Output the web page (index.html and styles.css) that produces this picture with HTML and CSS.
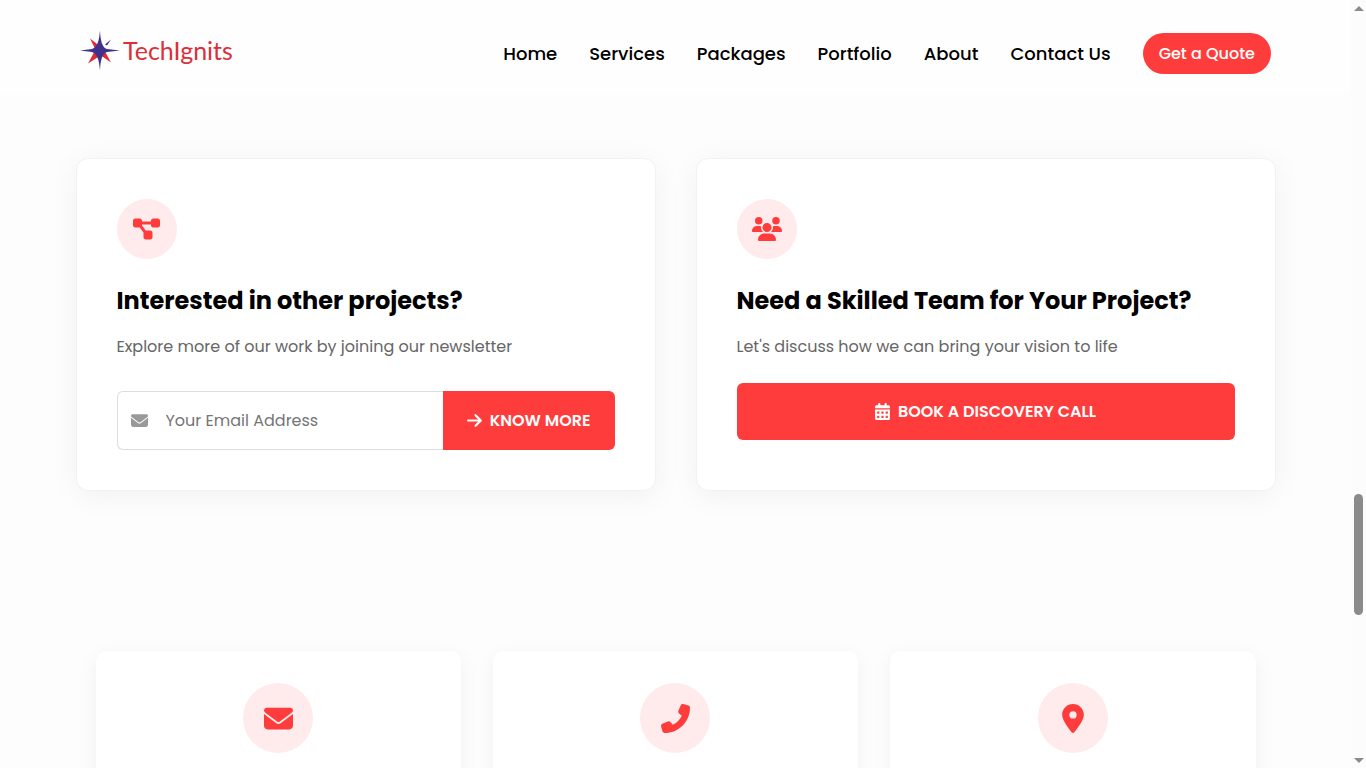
FILE: index.html
```html
<!DOCTYPE html>
<html lang="en">
<head>
  <meta charset="UTF-8">
  <meta name="viewport" content="width=device-width, initial-scale=1.0">
  <title>TechIgnits</title>
  <link rel="stylesheet" href="styles.css">
</head>
<body>
  <div class="page">
    <header class="header">
      <a href="#" class="logo">
        <svg class="logo-star" viewBox="0 0 40 40" aria-hidden="true">
          <path fill="#e02b35" d="M10 8 L19 15 L15 18Z M8 33 L14 22 L19 26Z M31 32 L21 25 L25 21Z"/>
          <path fill="#3f328c" d="M31 9 L27 15 L25 14Z"/>
          <path fill="#3f328c" d="M20 0 C20.500 10 22 17 27 18.500 L40 20 L27 21.500 C22 23 20.500 30 20 40 C19 30 18 24 12 21.500 L0 20 L12 18.500 C18 16 19 10 20 0Z"/>
        </svg>
        <span>TechIgnits</span>
      </a>
      <nav class="nav">
        <a href="#">Home</a>
        <a href="#">Services</a>
        <a href="#">Packages</a>
        <a href="#">Portfolio</a>
        <a href="#">About</a>
        <a href="#">Contact Us</a>
        <a href="#" class="quote-btn">Get a Quote</a>
      </nav>
    </header>

    <main>
      <section class="cta">
        <div class="cta-card">
          <div class="icon-circle">
            <svg width="27" height="24" viewBox="0 0 576 512" aria-hidden="true"><path d="M0 80C0 53.5 21.5 32 48 32l96 0c26.5 0 48 21.5 48 48l0 16 192 0 0-16c0-26.5 21.5-48 48-48l96 0c26.5 0 48 21.5 48 48l0 96c0 26.5-21.5 48-48 48l-96 0c-26.5 0-48-21.5-48-48l0-16-192 0 0 16c0 1.7-.1 3.4-.3 5L272 288l96 0c26.5 0 48 21.5 48 48l0 96c0 26.5-21.5 48-48 48l-96 0c-26.5 0-48-21.5-48-48l0-96c0-1.7 .1-3.4 .3-5L144 224l-96 0c-26.5 0-48-21.5-48-48L0 80z"/></svg>
          </div>
          <h2>Interested in other projects?</h2>
          <p>Explore more of our work by joining our newsletter</p>
          <form class="newsletter">
            <label class="email-field">
              <svg width="17" height="17" viewBox="0 0 512 512" role="img" aria-label="Email"><path d="M48 64C21.5 64 0 85.5 0 112c0 15.1 7.1 29.3 19.2 38.4L236.8 313.6c11.4 8.5 27 8.5 38.4 0L492.8 150.4c12.1-9.1 19.2-23.3 19.2-38.4c0-26.5-21.5-48-48-48L48 64zM0 176L0 384c0 35.3 28.7 64 64 64l384 0c35.3 0 64-28.7 64-64l0-208L294.4 339.2c-22.8 17.1-54 17.1-76.8 0L0 176z"/></svg>
              <input type="email" placeholder="Your Email Address">
            </label>
            <button type="submit" class="btn">
              <svg width="15" height="17" viewBox="0 0 448 512" aria-hidden="true"><path d="M438.6 278.6c12.5-12.5 12.5-32.8 0-45.3l-160-160c-12.5-12.5-32.8-12.5-45.3 0s-12.5 32.8 0 45.3L338.8 224 32 224c-17.7 0-32 14.3-32 32s14.3 32 32 32l306.7 0L233.4 393.4c-12.5 12.5-12.5 32.8 0 45.3s32.8 12.5 45.3 0l160-160z"/></svg>
              KNOW MORE
            </button>
          </form>
        </div>

        <div class="cta-card">
          <div class="icon-circle">
            <svg width="30" height="24" viewBox="0 0 640 512" aria-hidden="true"><path d="M144 0a80 80 0 1 1 0 160A80 80 0 1 1 144 0zM512 0a80 80 0 1 1 0 160A80 80 0 1 1 512 0zM0 298.7C0 239.8 47.8 192 106.7 192l42.7 0c15.9 0 31 3.5 44.6 9.7c-1.3 7.2-1.9 14.7-1.9 22.3c0 38.2 16.8 72.5 43.3 96c-.2 0-.4 0-.7 0L21.3 320C9.6 320 0 310.4 0 298.7zM405.3 320c-.2 0-.4 0-.7 0c26.6-23.5 43.3-57.8 43.3-96c0-7.6-.7-15-1.9-22.3c13.6-6.3 28.7-9.7 44.6-9.7l42.7 0C592.2 192 640 239.8 640 298.7c0 11.8-9.6 21.3-21.3 21.3l-213.3 0zM224 224a96 96 0 1 1 192 0 96 96 0 1 1 -192 0zM128 485.3C128 411.7 187.7 352 261.3 352l117.3 0C452.3 352 512 411.7 512 485.3c0 14.7-11.9 26.7-26.7 26.7l-330.7 0c-14.7 0-26.7-11.9-26.7-26.7z"/></svg>
          </div>
          <h2>Need a Skilled Team for Your Project?</h2>
          <p>Let's discuss how we can bring your vision to life</p>
          <a href="#" class="btn btn-block">
            <svg width="15" height="17" viewBox="0 0 448 512" aria-hidden="true"><path fill-rule="evenodd" d="M128 0c17.7 0 32 14.3 32 32l0 32 128 0 0-32c0-17.7 14.3-32 32-32s32 14.3 32 32l0 32 48 0c26.5 0 48 21.5 48 48l0 48L0 160l0-48C0 85.5 21.5 64 48 64l48 0 0-32c0-17.7 14.3-32 32-32zM0 192l448 0 0 272c0 26.5-21.5 48-48 48L48 512c-26.5 0-48-21.5-48-48L0 192zM64 256v64h64v-64zM192 256v64h64v-64zM320 256v64h64v-64zM64 384v64h64v-64zM192 384v64h64v-64zM320 384v64h64v-64z"/></svg>
            BOOK A DISCOVERY CALL
          </a>
        </div>
      </section>

      <section class="contact">
        <div class="contact-card">
          <div class="icon-circle large">
            <svg width="29" height="29" viewBox="0 0 512 512" role="img" aria-label="Email"><path d="M48 64C21.5 64 0 85.5 0 112c0 15.1 7.1 29.3 19.2 38.4L236.8 313.6c11.4 8.5 27 8.5 38.4 0L492.8 150.4c12.1-9.1 19.2-23.3 19.2-38.4c0-26.5-21.5-48-48-48L48 64zM0 176L0 384c0 35.3 28.7 64 64 64l384 0c35.3 0 64-28.7 64-64l0-208L294.4 339.2c-22.8 17.1-54 17.1-76.8 0L0 176z"/></svg>
          </div>
        </div>
        <div class="contact-card">
          <div class="icon-circle large">
            <svg width="29" height="29" viewBox="0 0 512 512" role="img" aria-label="Phone"><path transform="translate(512 0) scale(-1 1)" d="M164.9 24.6c-7.7-18.6-28-28.5-47.4-23.2l-88 24C12.1 30.2 0 46 0 64C0 311.4 200.6 512 448 512c18 0 33.8-12.1 38.6-29.5l24-88c5.3-19.4-4.6-39.7-23.2-47.4l-96-40c-16.3-6.8-35.2-2.1-46.3 11.6L304.7 368C234.3 334.7 177.3 277.7 144 207.3L193.3 167c13.7-11.2 18.4-30 11.6-46.3l-40-96z"/></svg>
          </div>
        </div>
        <div class="contact-card">
          <div class="icon-circle large">
            <svg width="22" height="29" viewBox="0 0 384 512" role="img" aria-label="Address"><path d="M215.7 499.2C267 435 384 279.4 384 192C384 86 298 0 192 0S0 86 0 192c0 87.4 117 243 168.3 307.2c12.3 15.3 35.1 15.3 47.4 0zM192 128a64 64 0 1 1 0 128 64 64 0 1 1 0-128z"/></svg>
          </div>
        </div>
      </section>
    </main>
  </div>

  <div class="scrollbar" aria-hidden="true">
    <span class="arrow up"></span>
    <span class="thumb"></span>
    <span class="arrow down"></span>
  </div>
</body>
</html>
```
FILE: styles.css
```css
:root {
  --red: #ff3c3c;
  --red-light: #ffebeb;
  --text: #000;
  --muted: #666;
}

* {
  box-sizing: border-box;
}

body {
  display: flex;
  height: 100vh;
  margin: 0;
  background: #fdfdfd;
  color: var(--text);
  font-family: Poppins, Inter, sans-serif;
  font-size: 16px;
}

a {
  color: inherit;
  text-decoration: none;
}

svg {
  fill: currentColor;
  flex-shrink: 0;
}

.page {
  flex: 1;
  min-width: 0;
  overflow: hidden;
}

/* Header */
.header {
  display: flex;
  justify-content: space-between;
  align-items: flex-start;
  height: 94px;
  padding: 30px 80px 0;
  background: #fefefe;
}

.logo {
  display: flex;
  align-items: center;
  gap: 3px;
  color: #dc2f38;
  font-family: Lato, sans-serif;
  font-size: 25px;
  line-height: 41px;
}

.logo-star {
  width: 40px;
  height: 41px;
}

.nav {
  display: flex;
  align-items: center;
  gap: 32px;
  padding-top: 3px;
  font-size: 18px;
  font-weight: 500;
  white-space: nowrap;
}

.quote-btn {
  padding: 0 16px;
  border-radius: 24px;
  background: var(--red);
  color: #fff;
  font-size: 16px;
  line-height: 41px;
}

/* Call to action cards */
.cta {
  display: grid;
  grid-template-columns: 1fr 1fr;
  gap: 40px;
  max-width: 1200px;
  margin: 64px auto 160px;
}

.cta-card {
  padding: 40px;
  border: 1px solid #f2f2f2;
  border-radius: 12px;
  background: #fff;
  box-shadow: 0 5px 30px rgba(0, 0, 0, 0.05);
}

.icon-circle {
  display: flex;
  align-items: center;
  justify-content: center;
  width: 60px;
  height: 60px;
  border-radius: 50%;
  background: var(--red-light);
  color: var(--red);
}

.icon-circle.large {
  width: 70px;
  height: 70px;
}

.cta-card h2 {
  margin: 25px 0 16px;
  font-size: 24px;
  font-weight: 700;
  line-height: 34px;
}

.cta-card p {
  margin: 0 0 23px;
  color: var(--muted);
  line-height: 26px;
}

.newsletter {
  display: flex;
  height: 59px;
  margin-top: 31px;
}

.email-field {
  display: flex;
  flex: 1;
  align-items: center;
  gap: 18px;
  min-width: 0;
  padding-left: 13px;
  border: 1px solid #ddd;
  border-right: 0;
  border-radius: 6px 0 0 6px;
  color: #999;
}

.email-field input {
  flex: 1;
  min-width: 0;
  padding: 0;
  border: 0;
  outline: 0;
  background: transparent;
  font: inherit;
}

.email-field input::placeholder {
  color: #757575;
}

.btn {
  display: flex;
  align-items: center;
  justify-content: center;
  gap: 8px;
  padding: 0 24px;
  border: 0;
  border-radius: 6px;
  background: var(--red);
  color: #fff;
  font-family: inherit;
  font-size: 16px;
  font-weight: 600;
}

.newsletter .btn {
  border-radius: 0 6px 6px 0;
}

.btn-block {
  height: 57px;
}

/* Contact cards */
.contact {
  display: grid;
  grid-template-columns: repeat(3, 1fr);
  gap: 32px;
  max-width: 1160px;
  margin: 0 auto;
}

.contact-card {
  display: flex;
  justify-content: center;
  min-height: 240px;
  padding: 32px;
  border-radius: 10px;
  background: #fff;
  box-shadow: 0 5px 20px rgba(0, 0, 0, 0.05);
}

/* Scrollbar */
.scrollbar {
  display: grid;
  grid-template-rows: 16px 478fr 121fr 137fr 16px;
  justify-items: center;
  width: 15px;
  background: #fcfcfc;
}

.thumb {
  grid-row: 3;
  width: 9px;
  border-radius: 5px;
  background: #8b8b8b;
}

.arrow {
  align-self: center;
  border: 5px solid transparent;
}

.arrow.up {
  border-top: 0;
  border-bottom-color: #8b8b8b;
}

.arrow.down {
  grid-row: 5;
  border-bottom: 0;
  border-top-color: #8b8b8b;
}
```
